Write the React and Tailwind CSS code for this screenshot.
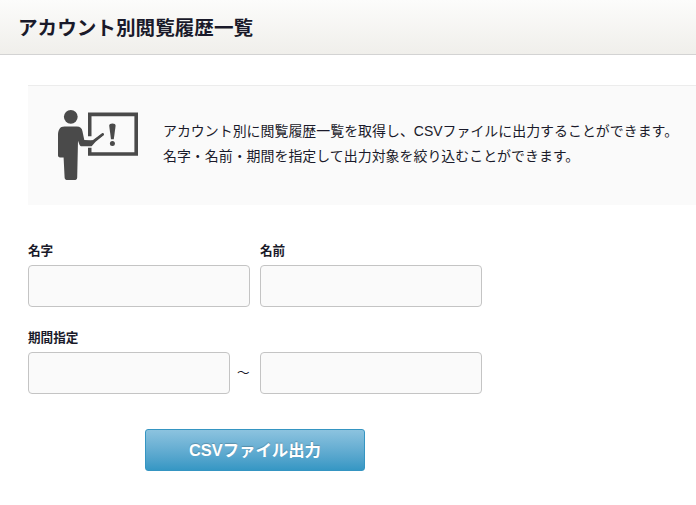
import React from "react";

const PresenterIcon = () => (
  <svg className="mb-0.5 h-[72px] w-[82px] shrink-0" viewBox="57 109 82 72" fill="#4a4a4a">
    <circle cx="70.8" cy="116.8" r="6.9" />
    <path d="M64.5 126.5h12.3c3.4 0 5 1.6 5.6 4.6l1.9 8.9 6.3.2 3.4-.3 8.2-6.4a1.1 1.1 0 0 1 1.4 1.7l-8 6.6-3.3 3.6c-.5.6-1 .8-1.9.8h-8.2c-1.5 0-2.3-.5-2.8-1.8l-1.4-3.6-.8 36.6c-.1 1.8-1.2 2.7-3 2.7h-6.5c-1.8 0-3-.9-3.1-2.7l-1-20h-3.5c-1.4 0-2.1-.7-2.1-2.1v-20c0-5.4 1.8-8.8 6.5-8.8Z" />
    <path d="m94 140.6 8.7-6.3" stroke="#4a4a4a" strokeWidth="2.3" strokeLinecap="round" />
    <path d="M88 112.6h50v43.2H88v-8.1h3.5v4.6h42.9v-36.1H91.5v20.1H88Z" />
    <path d="M109.2 125.8c0-1.7 1.2-2.4 3.2-2.4s3.2.7 3.2 2.4l-1.8 13.4h-2.8Z" />
    <circle cx="112.4" cy="143.6" r="2.5" />
  </svg>
);

const Field = ({ label, className }) => (
  <label className={`block ${className}`}>
    <span className="block h-[30px] whitespace-nowrap text-[12.6px] leading-[32px] font-bold">
      {label}
    </span>
    <input
      type="text"
      className="block h-[42px] w-full rounded-[4px] border border-[#c4c4c4] bg-[#fafafa] px-3 outline-none"
    />
  </label>
);

const App = () => {
  return (
    <div className="min-h-screen overflow-hidden bg-white font-['Liberation_Sans','Noto_Sans_CJK_JP',sans-serif] text-[14px] text-[#1a1a2a]">
      <header className="flex h-[55px] items-center border-b border-[#d3d3d3] bg-linear-to-b from-[#fcfcfb] to-[#f0efeb] pl-[18px]">
        <h1 className="pt-[3px] text-[19.6px] font-bold">アカウント別閲覧履歴一覧</h1>
      </header>

      <main className="pt-[30px] pl-7">
        <section className="flex h-[120px] items-center border-t border-[#ececec] bg-[#fafafa] pl-[29px]">
          <PresenterIcon />
          <p className="mb-1 ml-6 whitespace-nowrap text-[13.95px] leading-[25px]">
            アカウント別に閲覧履歴一覧を取得し、CSVファイルに出力することができます。
            <br />
            名字・名前・期間を指定して出力対象を絞り込むことができます。
          </p>
        </section>

        <form className="pt-[30px]" onSubmit={(e) => e.preventDefault()}>
          <div className="flex gap-2.5">
            <Field label="名字" className="w-[222px]" />
            <Field label="名前" className="w-[222px]" />
          </div>

          <div className="mt-[15px] flex items-end">
            <Field label="期間指定" className="w-[202px]" />
            <span className="w-[30px] pl-[7px] text-[12.6px] leading-[42px]">〜</span>
            <Field label="" className="w-[222px]" />
          </div>

          <button
            type="submit"
            className="mt-[35px] ml-[117px] block h-[42px] w-[220px] rounded-[3px] border border-[#3595c2] bg-linear-to-b from-[#8cc3df] to-[#3597c4] text-[16.4px] font-bold text-white [text-shadow:0_-1px_1px_rgba(0,0,0,0.2)]"
          >
            CSVファイル出力
          </button>
        </form>
      </main>
    </div>
  );
};

export default App;
